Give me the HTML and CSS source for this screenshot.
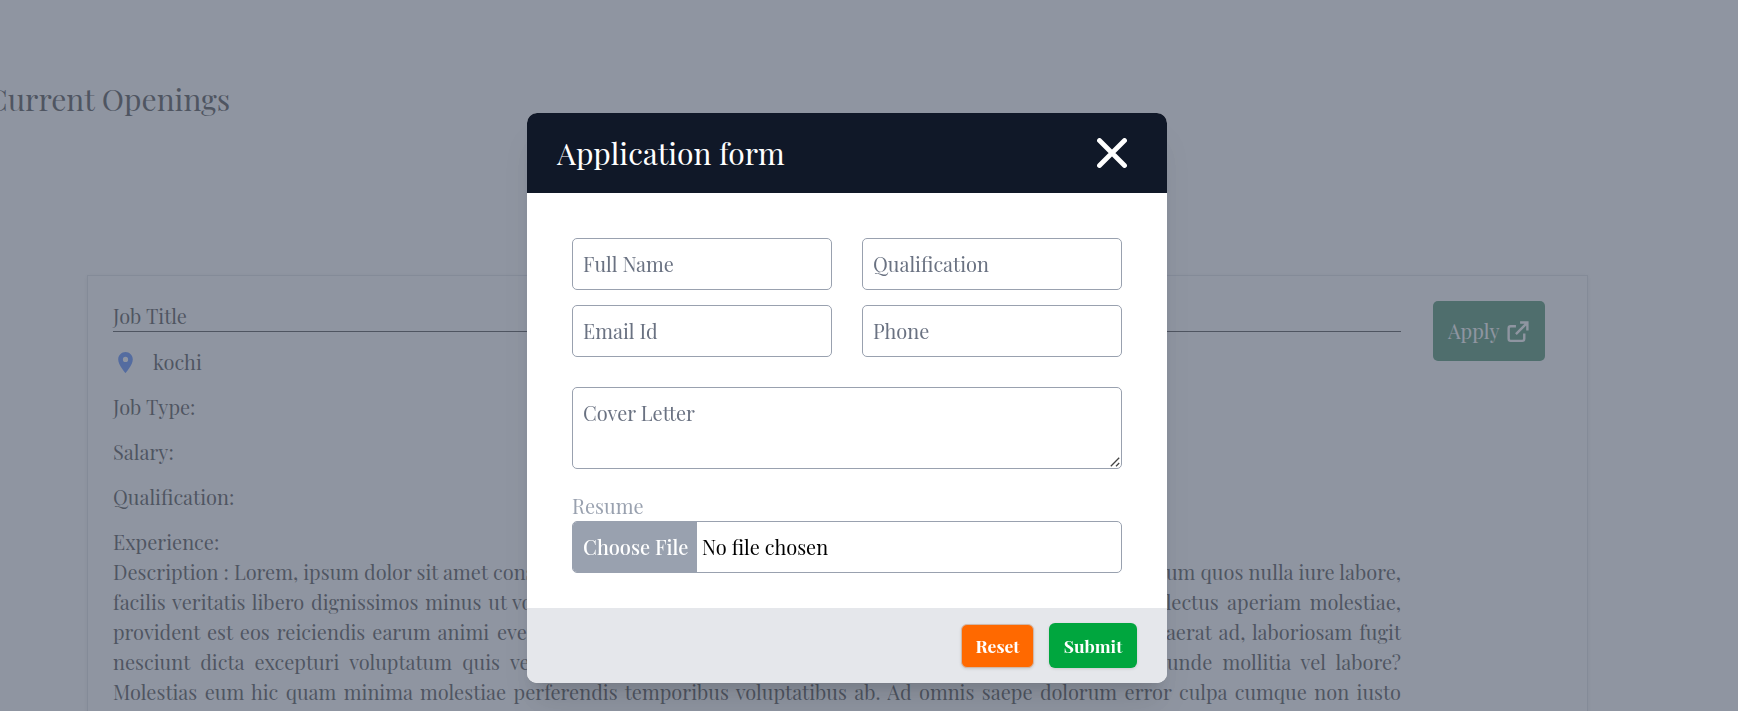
FILE: index.html
```html
<!DOCTYPE html>
<html lang="en">
<head>
<meta charset="utf-8">
<title>Current Openings</title>
<link rel="stylesheet" href="styles.css">
</head>
<body>
<main class="page">
  <h1 class="page-title">Current Openings</h1>
  <section class="job">
    <div class="job-info">
      <h2 class="job-title">Job Title</h2>
      <div class="job-place">
        <svg class="pin" viewBox="0 0 24 24"><path d="M12 2C8.13 2 5 5.13 5 9c0 5.25 7 13 7 13s7-7.75 7-13c0-3.87-3.13-7-7-7zm0 9.5a2.5 2.5 0 0 1 0-5 2.5 2.5 0 0 1 0 5z"/></svg>
        <span>kochi</span>
      </div>
      <p class="job-row">Job Type:</p>
      <p class="job-row">Salary:</p>
      <p class="job-row">Qualification:</p>
      <p class="job-row">Experience:</p>
      <div class="desc">
        <div class="line"><span class="seg l1">Description : Lorem, ipsum dolor sit amet</span><span class="mid m1">consectetur adipisicing elit.</span><span class="seg r1">um quos nulla iure labore,</span></div>
        <div class="line"><span class="seg l2">facilis veritatis libero dignissimos minus ut</span><span class="mid m2">voluptatum</span><span class="seg r2">delectus aperiam molestiae,</span></div>
        <div class="line"><span class="seg l3">provident est eos reiciendis earum animi</span><span class="mid m3">eveniet</span><span class="seg r3">quaerat ad, laboriosam fugit</span></div>
        <div class="line"><span class="seg l4">nesciunt dicta excepturi voluptatum quis</span><span class="mid m4">vero</span><span class="seg r4">unde mollitia vel labore?</span></div>
        <div class="line"><span class="seg full">Molestias eum hic quam minima molestiae perferendis temporibus voluptatibus ab. Ad omnis saepe dolorum error culpa cumque non iusto</span></div>
      </div>
    </div>
    <button class="apply">Apply
      <svg class="ext" viewBox="0 0 24 24"><path d="M10.5 7H5.5a2 2 0 0 0-2 2v10a2 2 0 0 0 2 2h11a2 2 0 0 0 2-2v-5M14.5 3.3h7V11M21 4 10.5 14.5"/></svg>
    </button>
  </section>
</main>

<div class="overlay">
  <form class="modal">
    <header class="modal-head">
      <h3 class="modal-title">Application form</h3>
      <svg class="close" viewBox="0 0 30 30"><path d="M2.5 2.5 27.5 27.5M27.5 2.5 2.5 27.5"/></svg>
    </header>
    <div class="modal-body">
      <div class="grid">
        <input class="field line-field" placeholder="Full Name">
        <input class="field line-field" placeholder="Qualification">
        <input class="field line-field" placeholder="Email Id">
        <input class="field line-field" placeholder="Phone">
      </div>
      <div class="cover-wrap">
        <textarea class="field cover" placeholder="Cover Letter"></textarea>
        <svg class="grip" viewBox="0 0 10 10"><path d="M.8 9.2 9.2.8M6 9.2 9.2 6"/></svg>
      </div>
      <label class="label">Resume</label>
      <div class="file">
        <span class="file-btn">Choose File</span>
        <span class="file-name">No file chosen</span>
      </div>
    </div>
    <footer class="modal-foot">
      <button type="reset" class="btn reset">Reset</button>
      <button type="button" class="btn submit">Submit</button>
    </footer>
  </form>
</div>
</body>
</html>
```

FILE: styles.css
```css
* { box-sizing: border-box; margin: 0; padding: 0; }

body {
  height: 711px;
  overflow: hidden;
  background: #fff;
  color: #000;
  font: 20px/30px "Playfair Display", "Liberation Serif", serif;
}

h1, h2, h3 { font-weight: 400; }

.page { height: 711px; overflow: hidden; padding-top: 77px; }

.page-title {
  margin-left: -13px;
  font-size: 30px;
  line-height: 45px;
}

.job {
  display: flex;
  align-items: flex-start;
  width: 1501px;
  height: 600px;
  margin: 153px 0 0 87px;
  padding: 25px;
  border: 1px solid #d1d5dc;
  box-shadow: 0 1px 4px rgba(0, 0, 0, .12);
}

.job-info { width: 1288px; }

.job-title {
  height: 31px;
  border-bottom: 1px solid #000;
  font-size: 20px;
}

.job-place { display: flex; align-items: center; gap: 15px; height: 30px; margin-top: 15px; }
.pin { width: 25px; height: 25px; fill: #155dfc; }

.job-row { margin-top: 15px; }

.line { display: flex; height: 30px; white-space: nowrap; }
.seg { flex: none; white-space: normal; text-align-last: justify; height: 30px; }
.mid { flex: 1; min-width: 0; overflow: hidden; }
.full { width: 1288px; }
.l1 { width: 375px; }
.l2 { width: 394px; }
.l3 { width: 376px; }
.l4 { width: 387px; }
.m1, .m2 { padding-left: 5px; }
.m3 { padding-left: 8px; }
.m4 { padding-left: 10px; }
.r1 { width: 235px; white-space: nowrap; }
.r2 { width: 257px; }
.r3 { width: 258px; }
.r4 { width: 234px; }

.apply {
  display: flex;
  align-items: center;
  gap: 5px;
  width: 112px;
  height: 60px;
  margin-left: 32px;
  padding-left: 15px;
  border: 0;
  border-radius: 5px;
  background: #016630;
  color: #fff;
  font: 20px/30px "Playfair Display", "Liberation Serif", serif;
}
.ext { width: 25px; height: 25px; fill: none; stroke: #fff; stroke-width: 2.3; }

.overlay {
  position: fixed;
  inset: 0;
  padding: 113px 0 0 527px;
  background: rgba(106, 114, 130, .75);
}

.modal {
  width: 640px;
  height: 570px;
  border-radius: 10px;
  overflow: hidden;
  background: #fff;
  box-shadow: 0 25px 31px -6px rgba(0, 0, 0, .1), 0 10px 12px -7px rgba(0, 0, 0, .1);
}

.modal-head {
  display: flex;
  align-items: center;
  justify-content: space-between;
  height: 80px;
  padding: 0 40px 0 30px;
  background: #101828;
  color: #fff;
}
.modal-title { font-size: 30px; line-height: 45px; }
.close { width: 30px; height: 30px; fill: none; stroke: #fff; stroke-width: 4.8; stroke-linecap: round; }

.modal-body { height: 415px; padding: 45px; }

.grid { display: grid; grid-template-columns: 260px 260px; gap: 15px 30px; }

.field {
  display: block;
  width: 100%;
  height: 52px;
  padding: 10px;
  border: 1px solid #99a1af;
  border-radius: 5px;
  background: #fff;
  font: 20px/30px "Playfair Display", "Liberation Serif", serif;
}
.field::placeholder { color: #6a7282; opacity: 1; }
.line-field { padding: 9px 10px 11px; }
.cover-wrap { position: relative; margin-top: 30px; }
.cover { height: 82px; resize: none; }
.grip {
  position: absolute;
  right: 2px;
  bottom: 2px;
  width: 10px;
  height: 10px;
  fill: none;
  stroke: #444;
  stroke-width: 1.3;
}

.label { display: block; margin-top: 22px; color: #99a1af; }

.file {
  display: flex;
  width: 550px;
  height: 52px;
  border: 1px solid #99a1af;
  border-radius: 5px;
  overflow: hidden;
  line-height: 50px;
}
.file-btn {
  width: 124px;
  padding-left: 10px;
  background: #99a1af;
  color: #fff;
  font-weight: 500;
}
.file-name { padding-left: 5px; }

.modal-foot {
  display: flex;
  align-items: center;
  justify-content: flex-end;
  gap: 15px;
  height: 75px;
  padding-right: 30px;
  background: #e5e7eb;
}
.btn {
  border-radius: 6px;
  color: #fff;
  font: 700 17.5px/25px "Playfair Display", "Liberation Serif", serif;
  box-shadow: 0 1px 3px rgba(0, 0, 0, .12);
}
.reset { width: 73px; height: 44px; border: 1px solid #d1b8a8; background: #ff6900; }
.submit { width: 88px; height: 45px; border: 0; background: #00a63e; }
```
